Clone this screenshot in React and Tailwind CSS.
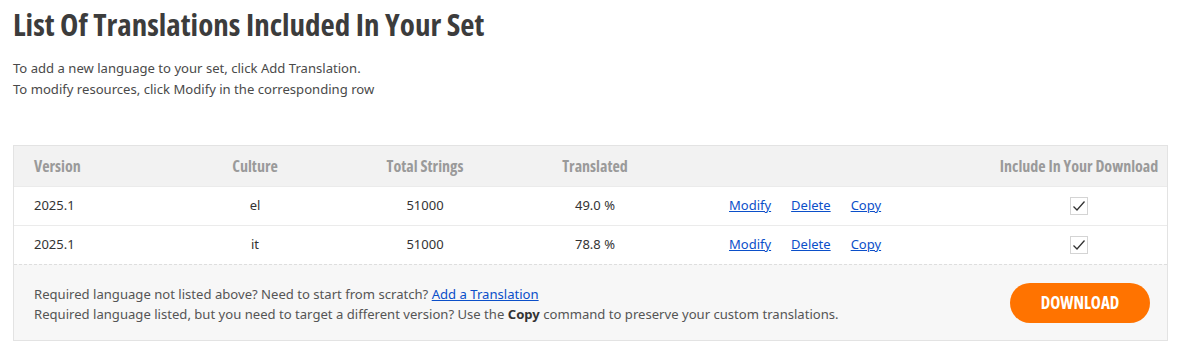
import React from "react";

const cond = { fontFamily: '"Open Sans", "DejaVu Sans Condensed", sans-serif' };

const rows = [
  { version: "2025.1", culture: "el", total: "51000", translated: "49.0 %" },
  { version: "2025.1", culture: "it", total: "51000", translated: "78.8 %" },
];

const Check = () => (
  <div className="w-[18px] h-[18px] border border-[#d4d4d4] bg-white flex items-center justify-center">
    <svg width="14" height="12" viewBox="0 0 14 12" fill="none">
      <path d="M1.5 6.5 L5 10 L12.5 1.5" stroke="#333" strokeWidth="1.3" />
    </svg>
  </div>
);

const cols = "grid grid-cols-[156px_170px_170px_170px_311px_1fr] items-center";

const App = () => {
  return (
    <div className="w-[1199px] h-[355px] bg-white pl-[13px] pr-[31px] pt-[5px]" style={{ fontFamily: '"Noto Sans", sans-serif' }}>
      <h1
        className="text-[31px] leading-[38px] font-bold text-[#3c3c3c] font-stretch-[75%]"
        style={cond}
      >
        List Of Translations Included In Your Set
      </h1>
      <div className="mt-[15px] text-[13.1px] leading-[21px] text-[#4a4a4a]">
        <p>To add a new language to your set, click Add Translation.</p>
        <p>To modify resources, click Modify in the corresponding row</p>
      </div>
      <div className="mt-[45px] border border-[#e3e3e3]">
        <div className={`${cols} h-[40px] bg-[#f2f2f2] text-[16px] font-bold text-[#9a9a9a] font-stretch-[75%]`} style={cond}>
          <div className="pl-[20px]">Version</div>
          <div className="text-center">Culture</div>
          <div className="text-center">Total Strings</div>
          <div className="text-center">Translated</div>
          <div></div>
          <div className="text-center">Include In Your Download</div>
        </div>
        {rows.map((r, i) => (
          <div key={i} className={`${cols} h-[39px] bg-white border-t border-[#ebebeb] text-[13px] text-[#333]`}>
            <div className="pl-[20px]">{r.version}</div>
            <div className="text-center">{r.culture}</div>
            <div className="text-center">{r.total}</div>
            <div className="text-center">{r.translated}</div>
            <div className="flex gap-[20px] pl-[49px] text-[#0b4fc9]">
              <a href="#" className="underline">Modify</a>
              <a href="#" className="underline">Delete</a>
              <a href="#" className="underline">Copy</a>
            </div>
            <div className="flex justify-center"><Check /></div>
          </div>
        ))}
        <div className="flex items-center justify-between bg-[#f7f7f7] border-t border-dashed border-[#dedede] h-[76px] pl-[20px] pr-[17px]">
          <div className="text-[13.1px] leading-[20px] text-[#555] pt-[2px]">
            <p>
              Required language not listed above? Need to start from scratch?{" "}
              <a href="#" className="underline text-[#0b4fc9]">Add a Translation</a>
            </p>
            <p>
              Required language listed, but you need to target a different version? Use the{" "}
              <b className="text-[#333]">Copy</b> command to preserve your custom translations.
            </p>
          </div>
          <button
            className="w-[140px] h-[40px] rounded-full bg-[#ff7300] text-white text-[17px] font-bold font-stretch-[75%]"
            style={cond}
          >
            DOWNLOAD
          </button>
        </div>
      </div>
    </div>
  );
};

export default App;
